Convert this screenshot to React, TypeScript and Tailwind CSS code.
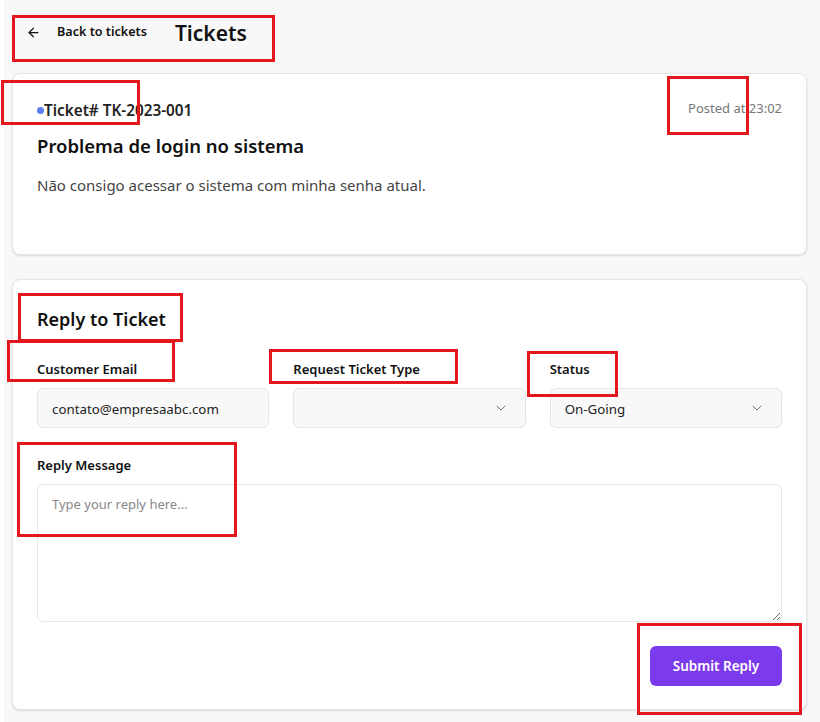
import { FC } from 'react';
import { ArrowLeft, ChevronDown } from 'lucide-react';

const font = { fontFamily: '"Noto Sans", "Open Sans", Arial, sans-serif' };

// annotation boxes drawn over the screenshot
const marks = [
    'left-[12px] top-[15px] w-[263px] h-[47px]',
    'left-[1px] top-[80px] w-[139px] h-[45px]',
    'left-[667px] top-[76px] w-[82px] h-[59px]',
    'left-[18px] top-[293px] w-[165px] h-[49px]',
    'left-[7px] top-[340px] w-[168px] h-[42px]',
    'left-[269px] top-[349px] w-[189px] h-[35px]',
    'left-[527px] top-[351px] w-[91px] h-[46px]',
    'left-[17px] top-[442px] w-[220px] h-[95px]',
    'left-[637px] top-[623px] w-[165px] h-[92px]',
];

const Field: FC<{ label: string; children: React.ReactNode }> = ({ label, children }) => (
    <div className="flex flex-col">
        <label className="text-[13px] leading-5 font-semibold text-[#111]">{label}</label>
        <div className="mt-[9px]">{children}</div>
    </div>
);

const SelectBox: FC<{ value?: string }> = ({ value }) => (
    <div className="h-10 flex items-center justify-between rounded-md border border-[#e6e6e6] bg-[#f8f8f8] pl-3.5 pr-4">
        <span className="pt-[3px] text-[13.3px] text-[#222]">{value}</span>
        <ChevronDown size={16} strokeWidth={1.5} className="text-[#777]" />
    </div>
);

const App: FC = () => {
    return (
        <div className="relative min-h-[722px] bg-white" style={font}>
            <main className="ml-1 min-h-[722px] bg-[#f8f8f8] pl-2 pr-[13px] pt-3 pb-3">
                <header className="h-10 flex items-center pl-3.5">
                    <ArrowLeft size={15} strokeWidth={2} className="text-[#111]" />
                    <span className="ml-[16px] text-[12.6px] font-semibold text-[#111]">Back to tickets</span>
                    <h1 className="ml-[28px] mt-[3px] text-[21px] font-semibold text-[#111]">Tickets</h1>
                </header>

                <section className="mt-[21px] h-[182px] rounded-lg border border-[#e5e5e5] bg-white px-6 pt-[25px] shadow-sm">
                    <div className="flex items-center justify-between">
                        <div className="flex items-center">
                            <span className="w-[7px] h-[7px] rounded-full bg-[#5b7cf0]" />
                            <span className="text-[15.3px] font-semibold text-[#222]">Ticket# TK-2023-001</span>
                        </div>
                        <span className="text-[13px] text-[#777] -mt-1">Posted at 23:02</span>
                    </div>
                    <h2 className="mt-[10px] text-[18.5px] font-semibold text-[#111]">Problema de login no sistema</h2>
                    <p className="mt-[14px] text-[15px] text-[#444]">Não consigo acessar o sistema com minha senha atual.</p>
                </section>

                <section className="mt-6 h-[431px] rounded-lg border border-[#e5e5e5] bg-white px-6 pt-[25px] shadow-sm">
                    <h2 className="text-[18px] leading-7 font-semibold text-[#111]">Reply to Ticket</h2>
                    <div className="mt-[26px] grid grid-cols-3 gap-6">
                        <Field label="Customer Email">
                            <div className="h-10 flex items-center rounded-md border border-[#e6e6e6] bg-[#f8f8f8] px-3.5 pt-[3px] text-[13.3px] text-[#222]">
                                contato@empresaabc.com
                            </div>
                        </Field>
                        <Field label="Request Ticket Type">
                            <SelectBox />
                        </Field>
                        <Field label="Status">
                            <SelectBox value="On-Going" />
                        </Field>
                    </div>
                    <div className="mt-[27px]">
                        <Field label="Reply Message">
                            <textarea
                                placeholder="Type your reply here..."
                                className="block w-full h-[138px] rounded-md border border-[#e6e6e6] bg-white px-3.5 py-2.5 text-[13px] placeholder:text-[#888] outline-none"
                            />
                        </Field>
                    </div>
                    <div className="mt-6 flex justify-end">
                        <button className="h-10 w-[132px] rounded-md bg-[#7c3aed] text-[13.5px] font-semibold text-white">
                            Submit Reply
                        </button>
                    </div>
                </section>
            </main>

            {marks.map((m) => (
                <div key={m} className={`absolute border-[3px] border-[#e3171d] pointer-events-none ${m}`} />
            ))}
        </div>
    );
};

export default App;
